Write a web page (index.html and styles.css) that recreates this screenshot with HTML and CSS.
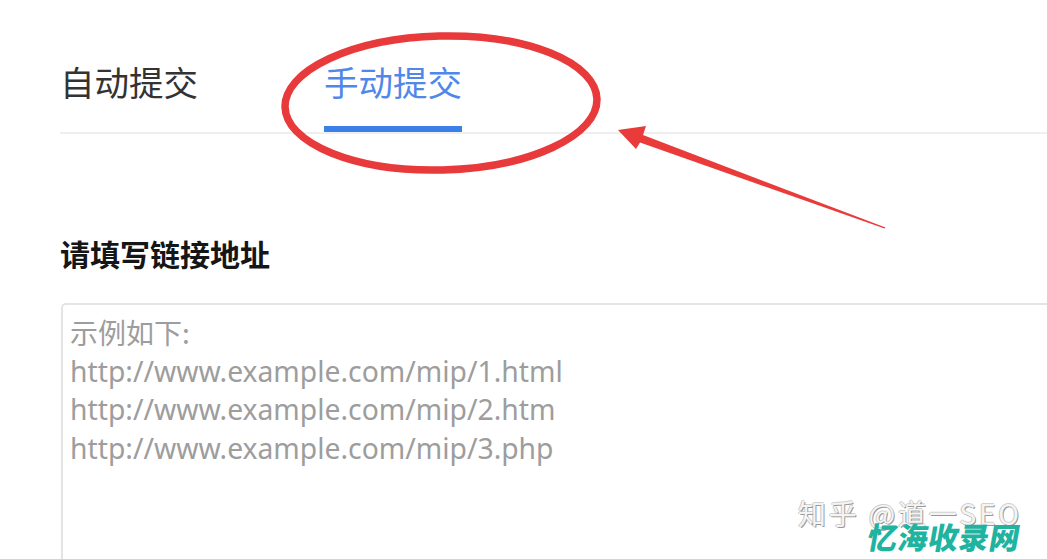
FILE: index.html
```html
<!DOCTYPE html>
<html lang="zh-CN">
<head>
<meta charset="utf-8">
<title>手动提交</title>
<link rel="stylesheet" href="styles.css">
</head>
<body>
<div class="page">
  <nav class="tabs">
    <div class="tab">自动提交</div>
    <div class="tab active">手动提交</div>
  </nav>
  <h2 class="label">请填写链接地址</h2>
  <div class="field">
    <div class="placeholder">
      <div>示例如下:</div>
      <div>http://www.example.com/mip/1.html</div>
      <div>http://www.example.com/mip/2.htm</div>
      <div>http://www.example.com/mip/3.php</div>
    </div>
  </div>
</div>

<svg class="annot" width="1047" height="559" viewBox="0 0 1047 559" xmlns="http://www.w3.org/2000/svg">
  <ellipse cx="441" cy="103" rx="156" ry="67" fill="none" stroke="#e8393b" stroke-width="7.5" transform="rotate(-1.5 441 103)"/>
  <polygon fill="#ea3b3b" points="618,130 646,126 643,135 885.5,227.6 884.6,228.6 640,142.5 636,149"/>
</svg>

<div class="wm">
  <div class="wm-zhihu">知乎 @道一SEO</div>
  <div class="wm-brand">忆海收录网</div>
</div>
</body>
</html>
```

FILE: styles.css
```css
html, body {
  margin: 0;
  padding: 0;
  background: #ffffff;
  overflow: hidden;
  width: 1047px;
  height: 559px;
}

body {
  position: relative;
  font-family: "Noto Sans", "Noto Sans CJK SC", sans-serif;
}

.page {
  box-sizing: border-box;
  height: 559px;
  padding-left: 60px;
  display: flex;
  flex-direction: column;
}

.tabs {
  display: flex;
  gap: 126px;
  border-bottom: 2px solid #efefef;
}

.tab {
  font-family: "Noto Sans CJK SC", sans-serif;
  font-size: 34.5px;
  line-height: 34px;
  height: 34px;
  padding: 64px 0 28px;
  color: #333333;
  border-bottom: 6px solid transparent;
}

.tab.active {
  color: #5287ea;
  border-bottom-color: #3b7fe9;
}

.label {
  margin: 104px 0 0;
  font-family: "Noto Sans CJK SC", sans-serif;
  font-size: 30px;
  line-height: 30px;
  font-weight: 700;
  color: #161616;
}

.field {
  flex: 1;
  min-height: 0;
  margin-top: 35px;
  margin-left: 1px;
  border: 2px solid #e4e4e4;
  border-right: 0;
  border-bottom: 0;
  border-radius: 5px 0 0 0;
  padding: 8px 7px 0;
  overflow: hidden;
}

.placeholder {
  font-size: 28.3px;
  line-height: 38.5px;
  color: #9d9d9d;
}

.placeholder div:first-child {
  font-family: "Noto Sans CJK SC", sans-serif;
  font-size: 28px;
}

.annot {
  position: absolute;
  left: 0;
  top: 0;
  pointer-events: none;
}

.wm {
  position: absolute;
  left: 798px;
  top: 495px;
}

.wm-zhihu {
  white-space: nowrap;
  font-family: "Noto Sans CJK SC", sans-serif;
  font-size: 28px;
  line-height: 36px;
  color: #f4f4f4;
  text-shadow: 1px 1px 0 #9a9a9a, -1px 0 0 #c8c8c8, 0 -1px 0 #d0d0d0;
  letter-spacing: 2.8px;
}

.wm-brand {
  position: absolute;
  left: 70px;
  top: 25px;
  white-space: nowrap;
  font-family: "Noto Sans CJK SC", sans-serif;
  font-size: 30px;
  line-height: 32px;
  font-weight: 900;
  color: #20b3a0;
  transform: skewX(-10deg);
  letter-spacing: 0.5px;
}
```
